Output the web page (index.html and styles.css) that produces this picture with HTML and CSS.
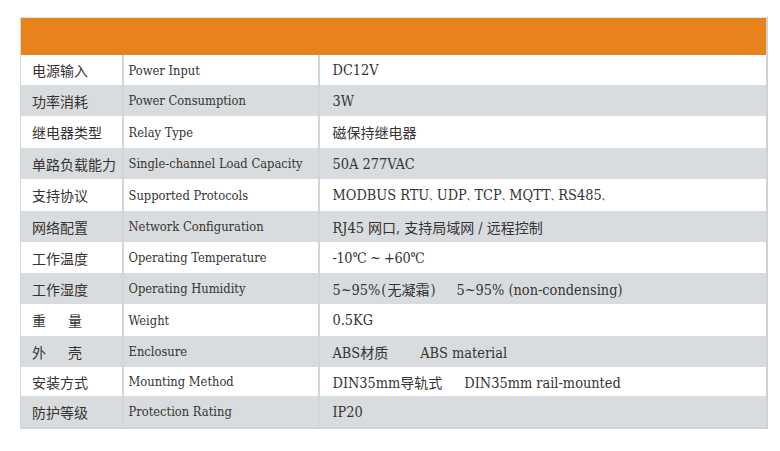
FILE: index.html
```html
<!DOCTYPE html>
<html lang="zh">
<head>
<meta charset="utf-8">
<title>Specs</title>
<link rel="stylesheet" href="styles.css">
</head>
<body>
<table class="spec">
  <colgroup>
    <col class="c1">
    <col class="c2">
    <col class="c3">
  </colgroup>
  <thead>
    <tr class="head"><th colspan="3"></th></tr>
  </thead>
  <tbody>
    <tr class="r1"><td class="zh">电源输入</td><td class="en">Power Input</td><td class="val">DC12V</td></tr>
    <tr class="r2 alt"><td class="zh">功率消耗</td><td class="en">Power Consumption</td><td class="val">3W</td></tr>
    <tr class="r3"><td class="zh">继电器类型</td><td class="en">Relay Type</td><td class="val"><span class="cjk">磁保持继电器</span></td></tr>
    <tr class="r4 alt"><td class="zh">单路负载能力</td><td class="en">Single-channel Load Capacity</td><td class="val">50A 277VAC</td></tr>
    <tr class="r5"><td class="zh">支持协议</td><td class="en">Supported Protocols</td><td class="val">MODBUS RTU<span class="dun">、</span>UDP<span class="dun">、</span>TCP<span class="dun">、</span>MQTT<span class="dun">、</span>RS485<span class="dun">、</span></td></tr>
    <tr class="r6 alt"><td class="zh">网络配置</td><td class="en">Network Configuration</td><td class="val">RJ45 <span class="cjk">网口</span>, <span class="cjk">支持局域网</span> / <span class="cjk">远程控制</span></td></tr>
    <tr class="r7"><td class="zh">工作温度</td><td class="en">Operating Temperature</td><td class="val temp">-10℃ ~ +60℃</td></tr>
    <tr class="r8 alt"><td class="zh">工作湿度</td><td class="en">Operating Humidity</td><td class="val">5~95%<span class="paren">(</span><span class="cjk">无凝霜</span><span class="paren">)</span><span class="gap-s">5~95% (non-condensing)</span></td></tr>
    <tr class="r9"><td class="zh spread">重量</td><td class="en">Weight</td><td class="val">0.5KG</td></tr>
    <tr class="r10 alt"><td class="zh spread">外壳</td><td class="en">Enclosure</td><td class="val">ABS<span class="cjk">材质</span><span class="gap-l">ABS material</span></td></tr>
    <tr class="r11"><td class="zh">安装方式</td><td class="en">Mounting Method</td><td class="val">DIN35mm<span class="cjk">导轨式</span><span class="gap-m">DIN35mm rail-mounted</span></td></tr>
    <tr class="r12 alt"><td class="zh">防护等级</td><td class="en">Protection Rating</td><td class="val">IP20</td></tr>
  </tbody>
</table>
</body>
</html>
```

FILE: styles.css
```css
html, body {
  margin: 0;
  padding: 0;
  background: #ffffff;
}

body {
  padding: 17px 0 0 20px;
  font-family: "DejaVu Serif Condensed", "DejaVu Serif", "Noto Sans CJK SC", serif;
  font-stretch: condensed;
  color: #363332;
}

.spec {
  width: 748px;
  border-collapse: collapse;
  table-layout: fixed;
  border-top: 1px solid #e6e6e6;
  border-left: 1px solid #d4d6d8;
  border-right: 2px solid #cfd1d3;
  border-bottom: 2px solid #d0d3d5;
}

.c1 { width: 102px; }
.c2 { width: 196px; }

.head th {
  height: 37px;
  padding: 0;
  background: #e7831a;
}

.spec td {
  height: 31px;
  padding: 0;
  vertical-align: middle;
  white-space: pre;
  overflow: hidden;
}

.spec tr.alt td {
  background: #d8dcde;
}

.zh {
  padding-left: 11px !important;
  font-family: "Noto Sans CJK SC", sans-serif;
  font-stretch: normal;
  font-size: 14px;
  border-right: 2px solid #d3d5d7;
}

.spread {
  letter-spacing: 22px;
}

.en {
  padding-left: 5px !important;
  font-size: 12.8px;
  border-right: 2px solid #d3d5d7;
}

.val {
  padding-left: 13px !important;
  font-size: 14.4px;
}

.val.temp {
  letter-spacing: -0.4px;
}

.val .cjk {
  font-family: "Noto Sans CJK SC", sans-serif;
  font-stretch: normal;
  font-size: 14px;
}

.val .dun {
  font-family: "Noto Sans CJK SC", sans-serif;
  font-size: 9px;
  letter-spacing: -1.4px;
}

.val .paren {
  margin: 0 1px;
}

.gap-s { margin-left: 20px; }
.gap-m { margin-left: 22px; }
.gap-l { margin-left: 32px; }

.r1 td { height: 30px; }
.r3 td { height: 32px; }
.r5 td { height: 32px; }
.r9 td { height: 32px; }
.r11 td { height: 29px; }
```
